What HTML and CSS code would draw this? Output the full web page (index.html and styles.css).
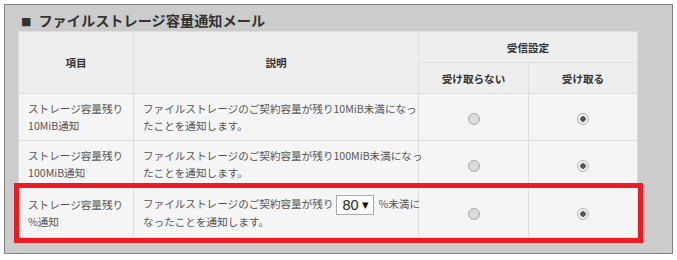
FILE: index.html
```html
<!DOCTYPE html>
<html lang="ja">
<head>
    <meta charset="UTF-8">
    <meta name="viewport" content="width=device-width, initial-scale=1.0">
    <title>ファイルストレージ容量通知メール</title>
    <link rel="stylesheet" href="styles.css">
</head>
<body>
    <div class="panel">
        <h2 class="panel-title"><span class="mark">■</span>ファイルストレージ容量通知メール</h2>

        <div class="table-wrap">
            <table class="notify-table">
                <colgroup>
                    <col class="col-item">
                    <col class="col-desc">
                    <col class="col-opt">
                    <col class="col-opt2">
                </colgroup>
                <thead>
                    <tr>
                        <th rowspan="2">項目</th>
                        <th rowspan="2">説明</th>
                        <th colspan="2">受信設定</th>
                    </tr>
                    <tr>
                        <th>受け取らない</th>
                        <th>受け取る</th>
                    </tr>
                </thead>
                <tbody>
                    <tr>
                        <td class="item">ストレージ容量残り<br>10MiB通知</td>
                        <td class="desc">ファイルストレージのご契約容量が残り10MiB未満になっ<br>たことを通知します。</td>
                        <td class="radio-cell"><input type="radio" name="n10" value="off"></td>
                        <td class="radio-cell"><input type="radio" name="n10" value="on" checked></td>
                    </tr>
                    <tr>
                        <td class="item">ストレージ容量残り<br>100MiB通知</td>
                        <td class="desc">ファイルストレージのご契約容量が残り100MiB未満になっ<br>たことを通知します。</td>
                        <td class="radio-cell"><input type="radio" name="n100" value="off"></td>
                        <td class="radio-cell"><input type="radio" name="n100" value="on" checked></td>
                    </tr>
                    <tr class="row-percent">
                        <td class="item">ストレージ容量残り<br>%通知</td>
                        <td class="desc">ファイルストレージのご契約容量が残り<span class="select-box"><select>
                            <option>50</option>
                            <option>60</option>
                            <option>70</option>
                            <option selected>80</option>
                            <option>90</option>
                        </select></span>%未満に<br>なったことを通知します。</td>
                        <td class="radio-cell"><input type="radio" name="np" value="off"></td>
                        <td class="radio-cell"><input type="radio" name="np" value="on" checked></td>
                    </tr>
                </tbody>
            </table>
            <div class="highlight"></div>
        </div>
    </div>
</body>
</html>
```

FILE: styles.css
```css
body {
    margin: 4px;
    background-color: #fff;
    font-family: "Noto Sans CJK JP", "Noto Sans", sans-serif;
}

.panel {
    width: 641px;
    height: 228px;
    border: 1px solid #808080;
    background-color: #cccccc;
    padding: 4px 13px 16px;
}

.panel-title {
    margin: 0;
    padding-left: 3px;
    font-size: 14.2px;
    line-height: 22px;
    height: 22px;
    font-weight: bold;
    color: #333;
}

.panel-title .mark {
    font-family: "DejaVu Sans", sans-serif;
    font-size: 11px;
    margin-right: 7px;
    vertical-align: 1px;
}

.table-wrap {
    position: relative;
    width: 619px;
}

.notify-table {
    width: 619px;
    border-collapse: collapse;
    table-layout: fixed;
    font-size: 10.6px;
}

.col-item { width: 115px; }
.col-desc { width: 285px; }
.col-opt { width: 110px; }
.col-opt2 { width: 109px; }

.notify-table th,
.notify-table td {
    border: 1px solid #dddddd;
}

.notify-table th {
    background-color: #eeeeee;
    color: #333;
    font-weight: bold;
    height: 30px;
    padding: 0;
    text-align: center;
}

.notify-table td {
    background-color: #f5f5f5;
    color: #555;
    line-height: 17px;
    height: 46px;
    padding: 0 9px;
    white-space: nowrap;
}

.notify-table .row-percent td {
    height: 49px;
}

.radio-cell {
    text-align: center;
}

input[type="radio"] {
    appearance: none;
    -webkit-appearance: none;
    width: 12px;
    height: 12px;
    margin: 0;
    border: 1px solid #aaa;
    border-radius: 50%;
    background-color: #dcdcdc;
    vertical-align: middle;
}

input[type="radio"]:checked {
    background: radial-gradient(circle, #555 0, #555 2.5px, #eee 3px, #eee 100%);
    border-color: #b5b5b5;
}

.select-box {
    position: relative;
    display: inline-block;
    vertical-align: middle;
    margin: -2px 4px -2px 3px;
}

.select-box select {
    appearance: none;
    -webkit-appearance: none;
    width: 38px;
    height: 20px;
    padding: 0 0 0 5px;
    border: 1px solid #aaa;
    border-radius: 0;
    background-color: #fff;
    color: #222;
    font-family: "Liberation Sans", sans-serif;
    font-size: 14.5px;
    line-height: 18px;
}

.select-box::after {
    content: "▼";
    position: absolute;
    right: 6px;
    top: 5px;
    font-family: "DejaVu Sans", sans-serif;
    font-size: 8.5px;
    line-height: 10px;
    color: #111;
    pointer-events: none;
}

.highlight {
    position: absolute;
    left: -4px;
    top: 152px;
    width: 619px;
    height: 50px;
    border: 5px solid #ec1c24;
    pointer-events: none;
}
```
